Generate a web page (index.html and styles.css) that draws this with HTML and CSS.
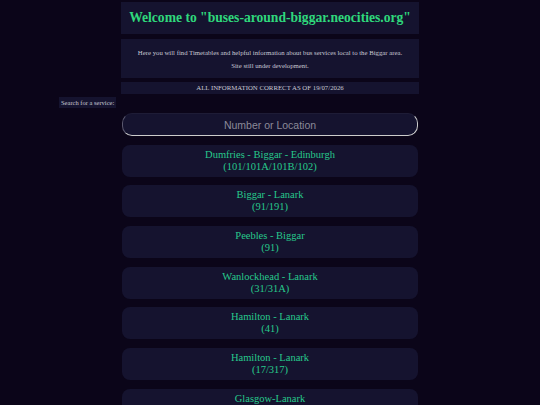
FILE: index.html
```html
<!DOCTYPE html>
<html>
<head>
<meta charset="utf-8">
<link rel="stylesheet" href="styles.css">
</head>
<body>
<div class="page">
  <div class="header"><h1>Welcome to "buses-around-biggar.neocities.org"</h1></div>
  <div class="intro">
    <p>Here you will find Timetables and helpful information about bus services local to the Biggar area.</p>
    <p>Site still under development.</p>
  </div>
  <div class="date">ALL INFORMATION CORRECT AS OF 19/07/2026</div>
  <div class="searchrow"><span class="label">Search for a service:</span></div>
  <input class="search" type="text" placeholder="Number or Location">
  <div class="list">
    <a class="card">Dumfries - Biggar - Edinburgh<br>(101/101A/101B/102)</a>
    <a class="card">Biggar - Lanark<br>(91/191)</a>
    <a class="card">Peebles - Biggar<br>(91)</a>
    <a class="card">Wanlockhead - Lanark<br>(31/31A)</a>
    <a class="card">Hamilton - Lanark<br>(41)</a>
    <a class="card">Hamilton - Lanark<br>(17/317)</a>
    <a class="card">Glasgow-Lanark<br>(240)</a>
  </div>
</div>
</body>
</html>
```
FILE: styles.css
```css
html, body {
  margin: 0;
  padding: 0;
  background: #0b0519;
  font-family: "Liberation Serif", "Times New Roman", serif;
}
.page {
  width: 298px;
  margin: 0 auto;
  padding-top: 2px;
  display: flex;
  flex-direction: column;
}
.header {
  background: #15132f;
  height: 32px;
  display: flex;
  align-items: center;
  justify-content: center;
}
.header h1 {
  margin: 0;
  font-size: 13.6px;
  font-weight: bold;
  white-space: nowrap;
  color: #2fd87c;
}
.intro {
  margin-top: 5px;
  background: #15132f;
  height: 39px;
  display: flex;
  flex-direction: column;
  justify-content: center;
  align-items: center;
}
.intro p {
  margin: 0;
  font-size: 6.75px;
  line-height: 13px;
  white-space: nowrap;
  color: #c9c9d4;
}
.date {
  margin-top: 4px;
  background: #15132f;
  height: 12px;
  line-height: 12px;
  text-align: center;
  font-size: 6.8px;
  color: #c9c9d4;
}
.searchrow {
  margin-left: -62px;
  margin-top: 3px;
  height: 11px;
  display: flex;
}
.label {
  background: #15132f;
  color: #c9c9d4;
  font-size: 6.5px;
  line-height: 11px;
  padding: 0 2px;
}
.search {
  margin: 5px 0 0 1px;
  width: 296px;
  height: 23px;
  box-sizing: border-box;
  border-radius: 10px;
  border: 1.5px solid #ccc;
  border-top-color: #1e1c36;
  border-left-color: #5a586e;
  background: #15132f;
  text-align: center;
  font-family: "Liberation Sans", Arial, sans-serif;
  font-size: 10.5px;
  color: #ddd;
  outline: none;
}
.search::placeholder {
  color: #8b8a99;
}
.list {
  margin: 8.5px 0 0 1px;
  width: 296px;
  display: flex;
  flex-direction: column;
  gap: 8.7px;
}
.card {
  display: block;
  background: #15132f;
  border-radius: 8px;
  height: 32px;
  box-sizing: border-box;
  padding-top: 4px;
  text-align: center;
  font-size: 10.5px;
  line-height: 12px;
  color: #27c98c;
}
```
